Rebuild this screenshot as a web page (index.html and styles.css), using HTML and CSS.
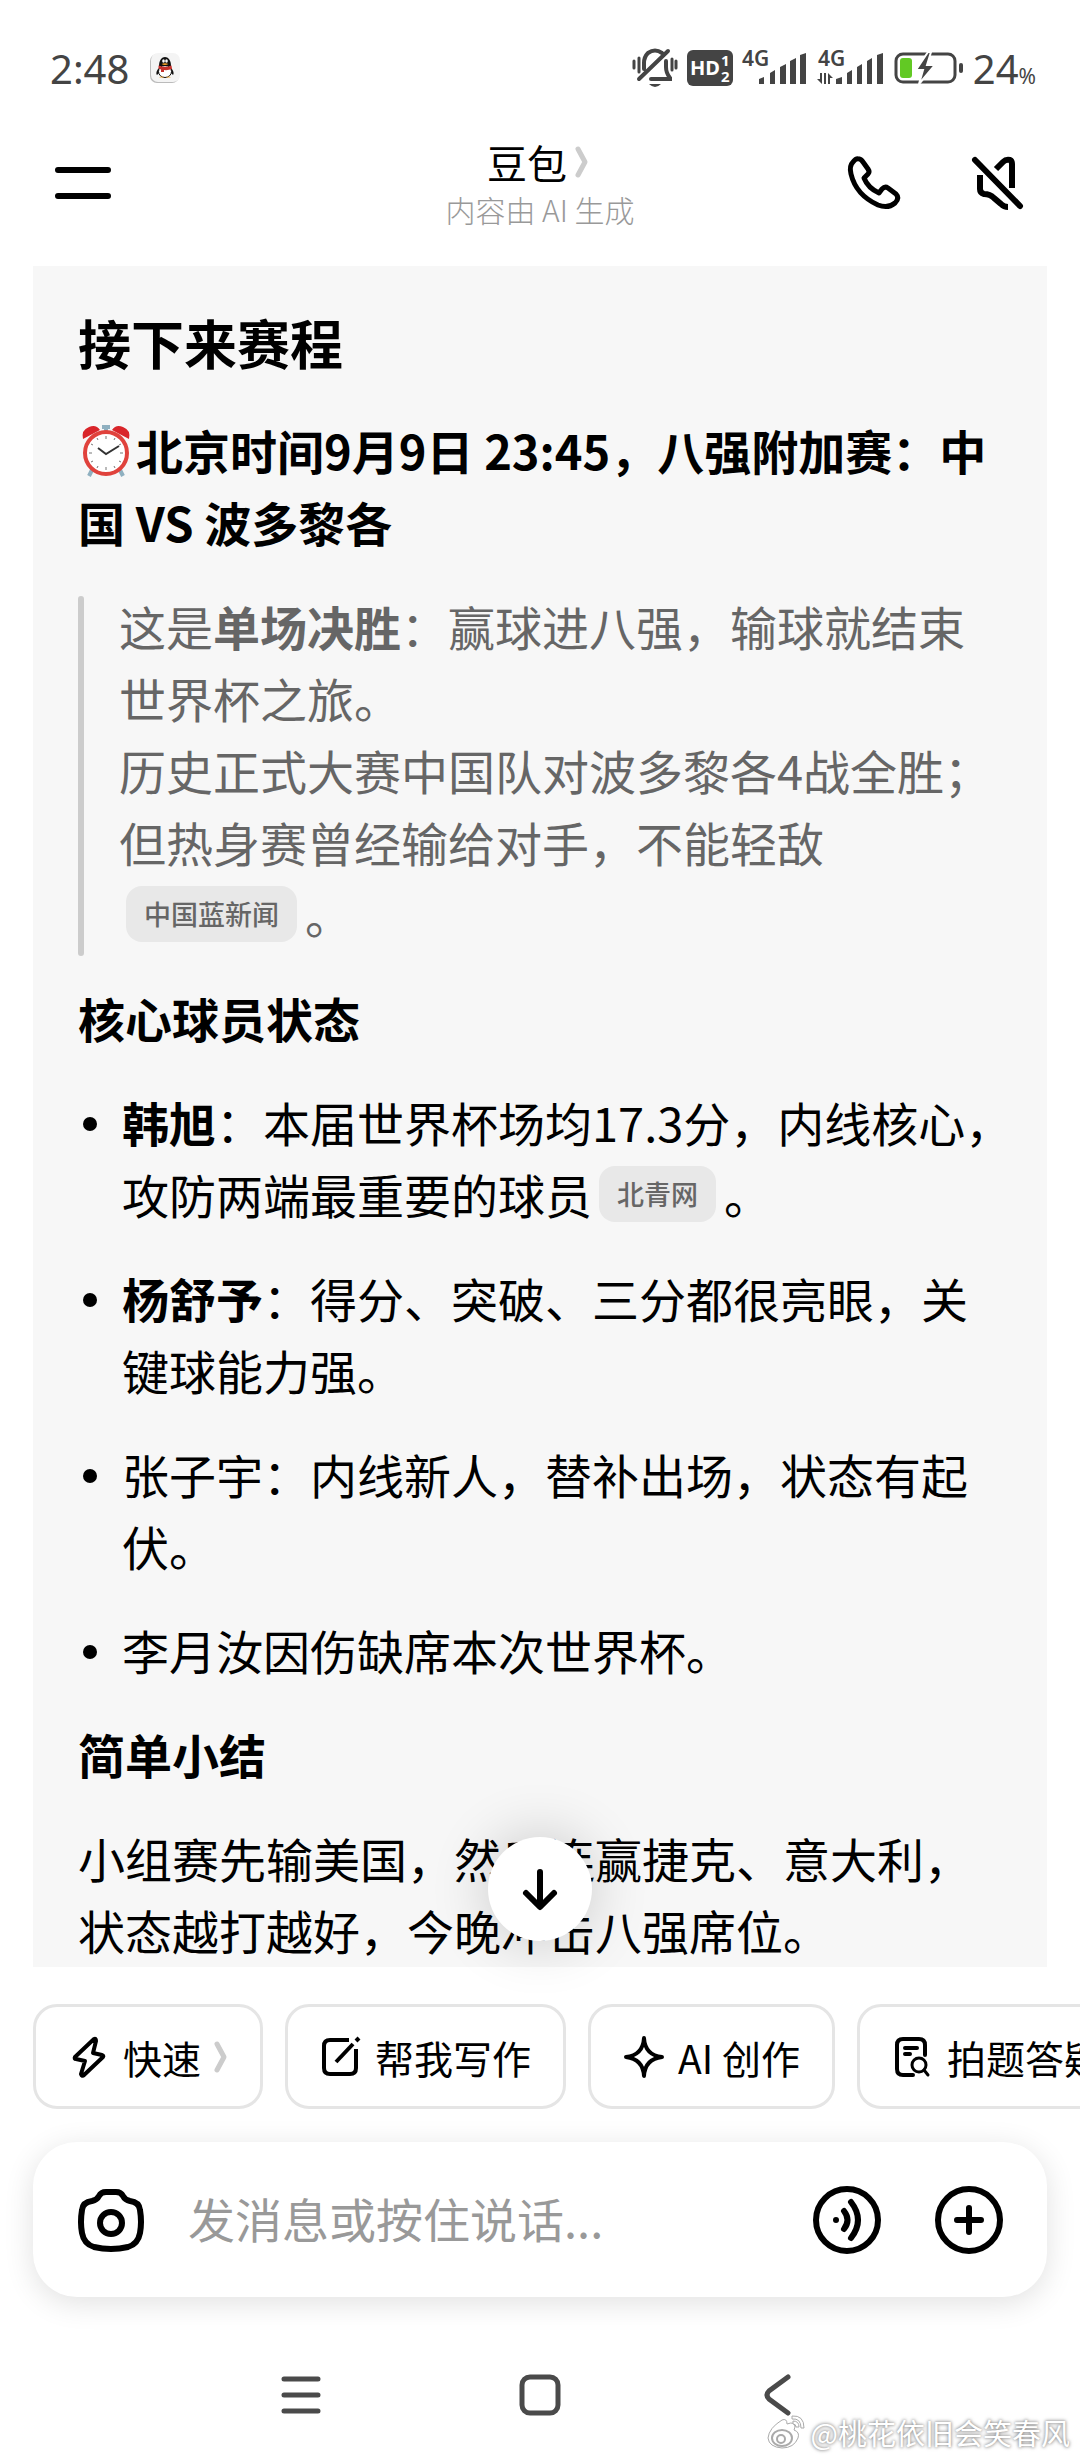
FILE: index.html
```html
<!DOCTYPE html>
<html lang="zh-CN">
<head>
    <meta charset="UTF-8">
    <meta name="viewport" content="width=device-width, initial-scale=1.0">
    <title>豆包</title>
    <link rel="stylesheet" href="styles.css">
</head>
<body>
    <div class="status-bar">
        <span class="time">2:48</span>
        <svg class="qq" width="32" height="32" viewBox="0 0 32 32">
            <rect x="1" y="2" width="29" height="29" rx="7" fill="#bbb"/>
            <rect x="2" y="1" width="29" height="29" rx="7" fill="#f4f4f4"/>
            <path d="M10 16C7 19 7 22 8 23L10 21ZM22 16C25 19 25 22 24 23L22 21Z" fill="#111"/>
            <ellipse cx="16" cy="19.500" rx="6.500" ry="6" fill="#fff" stroke="#111"/>
            <path d="M10 14C10 2 22 2 22 14Z" fill="#111"/>
            <ellipse cx="14.500" cy="9" rx="1.300" ry="1.800" fill="#fff"/>
            <ellipse cx="17.500" cy="9" rx="1.300" ry="1.800" fill="#fff"/>
            <path d="M12.500 12Q16 10.500 19.500 12Q16 14 12.500 12Z" fill="#f7a326"/>
            <path d="M9.500 13.500Q16 16 22.500 13.500L23 17Q19 18.500 15 18V20H12V17.500L9.500 16.500Z" fill="#c6302b"/>
            <path d="M10 25.500Q13 23.500 15 25.500ZM17 25.500Q19 23.500 22 25.500Z" fill="#f7a326"/>
        </svg>
        <div class="status-icons">
            <svg width="46" height="40" viewBox="0 0 46 40" fill="none" stroke="#444" stroke-width="4" stroke-linecap="round">
                <path d="M7 31L36 3M30 5Q23 0 16 5Q12 9 12 15V21M34 13V19Q34 25 38 30V31H19"/>
                <path d="M2 13V20M7 10V24M40 11V22M44 13V20" stroke-width="3"/>
                <path d="M17 36H29Q23 42 17 36Z" fill="#444" stroke="none"/>
            </svg>
            <svg width="46" height="36" viewBox="0 0 46 36">
                <rect width="46" height="36" rx="6" fill="#444"/>
                <g fill="#fff" font-family="Noto Sans" font-weight="700">
                    <text x="3" y="25" font-size="20">HD</text>
                    <text x="34" y="16" font-size="15">1</text>
                    <text x="34" y="32" font-size="15">2</text>
                </g>
            </svg>
            <svg width="66" height="36" viewBox="0 0 66 36" fill="#444">
                <text x="0" y="16" font-family="Noto Sans" font-weight="600" font-size="21">4G</text>
                <path d="M17 34V29L22 27V34ZM28 34V23L33 20V34ZM38 34V17L44 14V34ZM48 34V11L54 8V34ZM58 34V5L64 3V34Z"/>
            </svg>
            <svg width="68" height="36" viewBox="0 0 68 36" fill="#444">
                <text x="1" y="16" font-family="Noto Sans" font-weight="600" font-size="21">4G</text>
                <path d="M0 29H3V23H5V34ZM7 23H9V34H7ZM11 23L16 28H13V34H11Z"/>
                <path d="M19 34V29L25 27V34ZM30 34V23L35 20V34ZM40 34V17L45 14V34ZM50 34V11L55 8V34ZM60 34V5L66 3V34Z"/>
            </svg>
            <svg width="70" height="34" viewBox="0 0 70 34">
                <rect x="2" y="3" width="59" height="28" rx="7" fill="none" stroke="#444" stroke-width="3"/>
                <rect x="6" y="7" width="12" height="20" rx="3" fill="#62c924"/>
                <path d="M34 1L22 19H29L25 33L41 14H33L37 1Z" fill="#444" stroke="#fff" stroke-width="2"/>
                <rect x="65" y="12" width="4" height="10" rx="2" fill="#444"/>
            </svg>
            <span class="percent">24<small>%</small></span>
        </div>
    </div>

    <header class="header">
        <button class="icon-btn" aria-label="菜单">
            <svg width="56" height="56" viewBox="0 0 56 56" stroke="#000" stroke-width="6" stroke-linecap="round">
                <path d="M4 14H54M4 40H54"/>
            </svg>
        </button>
        <div class="title">
            <h1>豆包
                <svg width="14" height="34" viewBox="0 0 14 34" fill="none" stroke="#ccc" stroke-width="5" stroke-linecap="round" stroke-linejoin="round">
                    <path d="M3 4L10 17L3 30"/>
                </svg>
            </h1>
            <p>内容由 AI 生成</p>
        </div>
        <div class="header-actions">
            <button class="icon-btn" aria-label="通话">
                <svg width="56" height="56" viewBox="0 0 56 56" fill="none" stroke="#000" stroke-width="5" stroke-linejoin="round">
                    <path d="M13 3Q10 2 7 6Q3 10 5 18Q10 39 32 49Q42 53 49 47Q54 42 50 38L42 32Q39 30 36 33L33 37Q22 32 18 22L22 18Q24 16 22 13L17 6Q15 3 13 3Z"/>
                </svg>
            </button>
            <button class="icon-btn" aria-label="静音">
                <svg width="56" height="56" viewBox="0 0 56 56" fill="none" stroke="#000" stroke-width="6">
                    <path d="M5 4L50 50" stroke-linecap="round"/>
                    <path d="M26 13L33 6Q36 3 40 4Q42 5 42 8V32M10 19V33Q10 37 14 38Q20 38 24 42L31 48Q34 51 38 51"/>
                </svg>
            </button>
        </div>
    </header>

    <main class="chat">
        <article class="message">
            <h2>接下来赛程</h2>
            <h3><svg class="clock" width="58" height="56" viewBox="0 0 58 56" role="img" aria-label="闹钟">
                    <path d="M15 46L11 54M41 46L45 54M28 5V10M24 5H32" stroke="#8fb0c0" stroke-width="4"/>
                    <path d="M5 17Q3 8 11 5Q18 2 22 8ZM51 17Q53 8 45 5Q38 2 34 8Z" fill="#d9252a"/>
                    <circle cx="28" cy="31" r="21" fill="#fff" stroke="#e0423c" stroke-width="4"/>
                    <path d="M28 14V17M28 45V48M11 31H14M42 31H45M19 16L20 18M37 16L36 18M13 22L15 23M43 22L41 23M13 40L15 39M43 40L41 39M19 46L20 44M37 46L36 44" stroke="#777" stroke-width="1"/>
                    <path d="M20 26L28 32L41 24" fill="none" stroke="#333" stroke-width="2"/>
                </svg>北京时间9月9日 23:45，八强附加赛：中国 VS 波多黎各</h3>
            <blockquote>
                这是<strong>单场决胜</strong>：赢球进八强，输球就结束世界杯之旅。<br>
                历史正式大赛中国队对波多黎各4战全胜；但热身赛曾经输给对手，不能轻敌<span class="nowrap"><a class="source" href="#">中国蓝新闻</a>。</span>
            </blockquote>
            <h3>核心球员状态</h3>
            <ul>
                <li><span class="nowrap"><strong>韩旭</strong>：本届世界杯场均17.3分，内线核心，</span><br>攻防两端最重要的球员<span class="nowrap"><a class="source" href="#">北青网</a>。</span></li>
                <li><strong>杨舒予</strong>：得分、突破、三分都很亮眼，关键球能力强。</li>
                <li>张子宇：内线新人，替补出场，状态有起伏。</li>
                <li>李月汝因伤缺席本次世界杯。</li>
            </ul>
            <h3>简单小结</h3>
            <p>小组赛先输美国，然后连赢捷克、意大利，状态越打越好，今晚冲击八强席位。</p>
        </article>
        <button class="scroll-down" aria-label="回到底部">
            <svg width="40" height="44" viewBox="0 0 40 44" fill="none" stroke="#000" stroke-width="6" stroke-linecap="round" stroke-linejoin="round">
                <path d="M20 5V39M6 26L20 40L34 26"/>
            </svg>
        </button>
    </main>

    <footer class="composer">
        <div class="chips">
            <button class="chip">
                <svg width="42" height="44" viewBox="0 0 42 44" fill="none" stroke="#000" stroke-width="4" stroke-linejoin="round">
                    <path d="M26 4L7 22Q6 24 8 24L17 26L13 39Q14 42 16 40L35 22Q36 21 34 20L25 18L28 6Q28 3 26 4Z"/>
                </svg>
                快速
                <svg class="more" width="14" height="34" viewBox="0 0 14 34" fill="none" stroke="#ccc" stroke-width="5" stroke-linecap="round" stroke-linejoin="round">
                    <path d="M3 4L10 17L3 30"/>
                </svg>
            </button>
            <button class="chip">
                <svg width="42" height="44" viewBox="0 0 42 44" fill="none" stroke="#000" stroke-width="4">
                    <path d="M29 5H10Q4 5 4 11V33Q4 39 10 39H30Q36 39 36 33V14"/>
                    <path d="M16 27L33 9" stroke-width="4"/>
                    <path d="M36 6L39 3" stroke-width="4"/>
                </svg>
                帮我写作
            </button>
            <button class="chip">
                <svg width="42" height="44" viewBox="0 0 42 44" fill="none" stroke="#000" stroke-width="4" stroke-linejoin="round">
                    <path d="M21 3Q22 20 39 22Q22 24 21 41Q20 24 3 22Q20 20 21 3Z"/>
                </svg>
                AI 创作
            </button>
            <button class="chip">
                <svg width="42" height="44" viewBox="0 0 42 44" fill="none" stroke="#000" stroke-width="4" stroke-linecap="round">
                    <path d="M21 40H11Q5 40 5 34V10Q5 4 11 4H27Q33 4 33 10V20M13 13H25M13 19H18"/>
                    <circle cx="27" cy="30" r="7" stroke-width="3"/>
                    <path d="M32 35L36 40" stroke-width="3"/>
                </svg>
                拍题答疑
            </button>
        </div>
        <form class="input-box">
            <button type="button" class="icon-btn" aria-label="拍照">
                <svg width="70" height="70" viewBox="0 0 70 70" fill="none" stroke="#000" stroke-width="6">
                    <path d="M35 7H30Q25 7 23 11Q21 15 16 16Q7 17 6 25Q4 37 6 48Q8 59 18 62Q35 66 52 62Q62 59 64 48Q66 37 64 25Q63 17 54 16Q49 15 47 11Q45 7 40 7Z"/>
                    <circle cx="35" cy="38" r="11"/>
                </svg>
            </button>
            <input type="text" placeholder="发消息或按住说话..." aria-label="发消息">
            <button type="button" class="icon-btn" aria-label="语音">
                <svg width="70" height="70" viewBox="0 0 70 70" fill="none" stroke="#000" stroke-width="6" stroke-linecap="round">
                    <circle cx="35" cy="35" r="31"/>
                    <circle cx="24" cy="35" r="3" fill="#000" stroke="none"/>
                    <path d="M32 26Q39 35 32 44M39 17Q53 35 39 53"/>
                </svg>
            </button>
            <button type="button" class="icon-btn" aria-label="更多">
                <svg width="70" height="70" viewBox="0 0 70 70" fill="none" stroke="#000" stroke-width="6" stroke-linecap="round">
                    <circle cx="35" cy="35" r="31"/>
                    <path d="M35 23V47M23 35H47"/>
                </svg>
            </button>
        </form>
    </footer>

    <nav class="nav-bar">
        <button class="icon-btn" aria-label="最近任务">
            <svg width="44" height="44" viewBox="0 0 44 44" stroke="#4a4a4a" stroke-width="5" stroke-linecap="round">
                <path d="M5 6H39M5 22H39M5 38H39"/>
            </svg>
        </button>
        <button class="icon-btn" aria-label="主屏幕">
            <svg width="44" height="44" viewBox="0 0 44 44" fill="none" stroke="#4a4a4a" stroke-width="5">
                <rect x="4" y="4" width="36" height="36" rx="8"/>
            </svg>
        </button>
        <button class="icon-btn" aria-label="返回">
            <svg width="44" height="44" viewBox="0 0 44 44" fill="none" stroke="#4a4a4a" stroke-width="5" stroke-linecap="round">
                <path d="M31 4L12 18Q8 22 12 26L31 40"/>
            </svg>
        </button>
        <div class="watermark">
            <svg width="42" height="36" viewBox="0 0 42 36" fill="#fff" stroke="#aaa" stroke-width="1">
                <path d="M17 6Q22 4 22 10Q30 7 30 13L29 16Q35 18 33 24Q29 34 17 34Q4 33 3 24Q4 14 17 6Z"/>
                <ellipse cx="17" cy="24" rx="10" ry="8" stroke-width="2"/>
                <circle cx="16" cy="25" r="4" stroke-width="2"/>
                <path d="M27 2Q39 1 39 14H36Q36 4 27 5ZM28 7Q34 7 34 13H31Q31 10 28 10Z"/>
            </svg>
            @桃花依旧会笑春风
        </div>
    </nav>
</body>
</html>
```

FILE: styles.css
```css
* {
    box-sizing: border-box;
}
body {
    margin: 0;
    height: 100vh;
    display: flex;
    flex-direction: column;
    overflow: hidden;
    background-color: #fff;
    color: #000;
    font-family: "Noto Sans CJK SC", sans-serif;
}
h1, h2, h3, p, ul, blockquote {
    margin: 0;
    padding: 0;
}
button {
    border: none;
    background: none;
    padding: 0;
    color: inherit;
    font-family: inherit;
    cursor: pointer;
}
svg {
    display: block;
    flex-shrink: 0;
    overflow: visible;
}

/* status bar */
.status-bar {
    display: flex;
    align-items: center;
    height: 136px;
    padding: 0 44px 0 50px;
    color: #444;
    font-family: "Noto Sans", sans-serif;
    font-size: 40px;
}
.qq {
    margin-left: 20px;
}
.status-icons {
    display: flex;
    align-items: center;
    gap: 9px;
    margin-left: auto;
}
.percent small {
    font-size: 21px;
}

.header {
    display: grid;
    grid-template-columns: 1fr auto 1fr;
    align-items: center;
    height: 130px;
    padding: 0 54px 34px;
}
.title {
    text-align: center;
}
.title h1 {
    display: flex;
    align-items: center;
    justify-content: center;
    gap: 8px;
    padding-right: 4px;
    font-size: 40px;
    font-weight: 400;
    line-height: 50px;
}
.title p {
    color: #999;
    font-size: 30px;
    font-weight: 300;
    line-height: 44px;
}
.header-actions {
    display: flex;
    justify-content: flex-end;
    gap: 68px;
}

.chat {
    position: relative;
    flex: 1;
    min-height: 0;
    margin: 0 33px;
}
.message {
    display: flex;
    flex-direction: column;
    gap: 32px;
    height: 100%;
    padding: 36px 36px 0 45px;
    overflow: hidden;
    background-color: #f7f7f7;
    font-size: 47px;
    line-height: 72px;
}
.message h2 {
    font-size: 53px;
    font-weight: 700;
    line-height: 80px;
}
.message h3 {
    font-size: 47px;
    font-weight: 700;
}
.message strong {
    font-weight: 700;
}
.clock {
    display: inline-block;
    vertical-align: -8px;
}
blockquote {
    position: relative;
    padding-left: 41px;
    color: #666;
}
blockquote::before {
    content: "";
    position: absolute;
    left: 0;
    top: 6px;
    bottom: -6px;
    width: 6px;
    border-radius: 3px;
    background-color: #ccc;
}
.nowrap {
    white-space: nowrap;
}
.source {
    display: inline-block;
    height: 56px;
    margin: 0 8px 0 7px;
    padding: 0 18px;
    border-radius: 16px;
    background-color: #e8e8e8;
    color: #666;
    font-size: 27px;
    font-weight: 500;
    line-height: 56px;
    text-decoration: none;
    vertical-align: 9px;
}
.message ul {
    display: flex;
    flex-direction: column;
    gap: 32px;
    list-style: none;
}
.message li {
    position: relative;
    padding-left: 44px;
}
.message li::before {
    content: "";
    position: absolute;
    left: 5px;
    top: 31px;
    width: 14px;
    height: 14px;
    border-radius: 50%;
    background-color: #000;
}
.scroll-down {
    position: absolute;
    left: 50%;
    bottom: 26px;
    display: flex;
    align-items: center;
    justify-content: center;
    width: 104px;
    height: 104px;
    margin-left: -52px;
    border-radius: 50%;
    background-color: #fff;
    box-shadow: 0 0 60px rgba(0, 0, 0, 0.2);
}

.composer {
    padding-top: 37px;
}
.chips {
    display: flex;
    gap: 22px;
    padding-left: 33px;
    overflow: hidden;
}
.chip {
    display: flex;
    flex-shrink: 0;
    align-items: center;
    gap: 13px;
    height: 105px;
    padding: 0 32px;
    border: 3px solid #e5e5e5;
    border-radius: 24px;
    font-size: 39px;
}
.input-box {
    display: flex;
    align-items: center;
    gap: 52px;
    height: 155px;
    margin: 33px 33px 0;
    padding: 0 43px;
    border-radius: 44px;
    background-color: #fff;
    box-shadow: 0 6px 30px rgba(0, 0, 0, 0.12);
}
.input-box input {
    flex: 1;
    min-width: 0;
    margin-left: -10px;
    padding: 0 0 4px;
    border: none;
    outline: none;
    background: none;
    font-family: inherit;
    font-size: 47px;
}
.input-box input::placeholder {
    color: #999;
}

.nav-bar {
    position: relative;
    display: flex;
    align-items: center;
    justify-content: center;
    gap: 195px;
    height: 163px;
    padding-top: 32px;
}
.watermark {
    position: absolute;
    right: 10px;
    bottom: 8px;
    display: flex;
    align-items: center;
    gap: 4px;
    color: #fff;
    font-size: 29px;
    line-height: 40px;
    text-shadow: 0 0 3px #888, 0 0 4px #aaa;
}
```
